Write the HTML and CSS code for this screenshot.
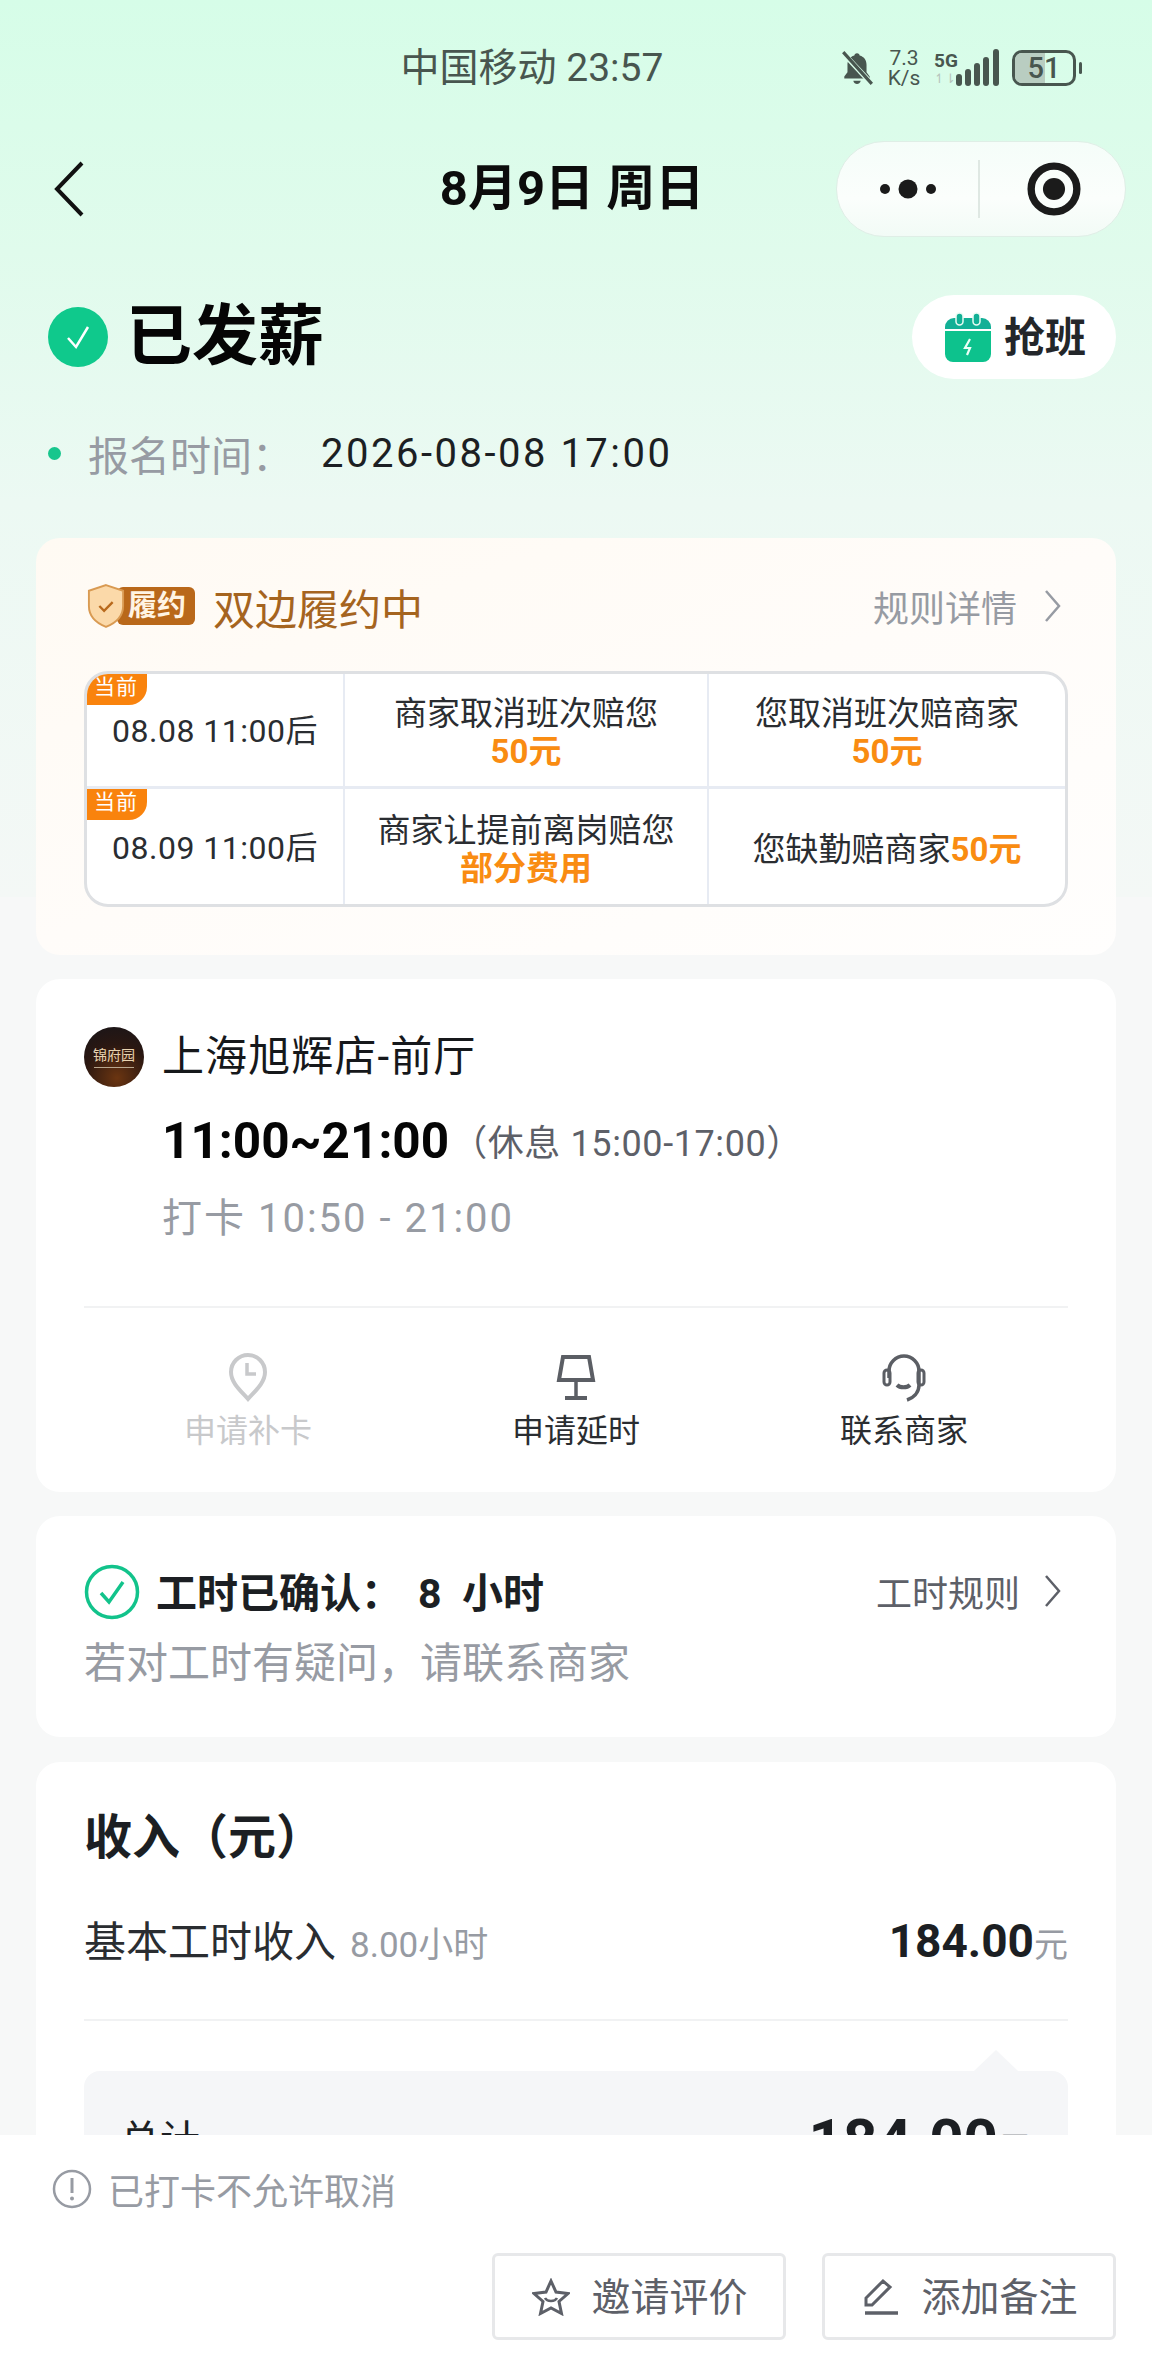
FILE: index.html
```html
<!DOCTYPE html>
<html lang="zh-CN">
<head>
    <meta charset="UTF-8">
    <meta name="viewport" content="width=device-width, initial-scale=1.0">
    <title>8月9日 周日</title>
    <link rel="stylesheet" href="styles.css">
</head>
<body>
    <div class="page">
        <div class="status-bar">
            <div class="status-center">中国移动 23:57</div>
            <div class="status-icons">
                <svg class="ic-bell" viewBox="0 0 32 34"><path d="M16 3c-1.500 0-2.500 1-2.500 2.300C9 6.500 7 10 7 14v7l-3 4v2h24v-2l-3-4v-7c0-4-2-7.500-6.500-8.700C18.500 4 17.500 3 16 3z" fill="#48564f"/><path d="M12.500 29h7c-.5 2-2 3-3.500 3s-3-1-3.500-3z" fill="#48564f"/><path d="M3 3l26 28" stroke="#d9fde9" stroke-width="5"/><path d="M3 2l27 30" stroke="#48564f" stroke-width="3"/></svg>
                <div class="net-speed"><span>7.3</span><span>K/s</span></div>
                <div class="net-type">
                    <span class="five-g">5G</span>
                    <span class="arrows">↿⇂</span>
                </div>
                <svg class="ic-signal" viewBox="0 0 44 38"><rect x="0" y="25" width="6" height="12" rx="3"/><rect x="9" y="20" width="6" height="17" rx="3"/><rect x="18" y="14" width="6" height="23" rx="3"/><rect x="27" y="8" width="6" height="29" rx="3"/><rect x="37" y="0" width="6" height="37" rx="3"/></svg>
                <div class="battery"><div class="battery-level" style="width: 51%"></div><span class="battery-num">51</span></div>
                <div class="battery-tip"></div>
            </div>
        </div>

        <div class="nav-bar">
            <svg class="ic-back" viewBox="0 0 34 58"><path d="M30 3L5 29l25 26" fill="none" stroke="#111" stroke-width="4"/></svg>
            <div class="nav-title">8月9日 周日</div>
            <div class="capsule">
                <div class="capsule-part">
                    <svg class="ic-dots" viewBox="0 0 58 22"><circle cx="6" cy="11" r="5"/><circle cx="29" cy="11" r="9.500"/><circle cx="52" cy="11" r="5"/></svg>
                </div>
                <div class="capsule-line"></div>
                <div class="capsule-part">
                    <svg class="ic-target" viewBox="0 0 38 38"><circle cx="19" cy="19" r="15.500" fill="none" stroke="#1b1b1b" stroke-width="5"/><circle cx="19" cy="19" r="7.500" fill="#1b1b1b"/></svg>
                </div>
            </div>
        </div>

        <div class="state-row">
            <div class="state-left">
                <svg class="ic-state" viewBox="0 0 60 60"><circle cx="30" cy="30" r="30" fill="#0fc98c"/><path d="M20 31l8 9 12-20" fill="none" stroke="#fff" stroke-width="2.500"/></svg>
                <h1 class="state-title">已发薪</h1>
            </div>
            <div class="grab-btn">
                <svg class="ic-cal" viewBox="0 0 50 50"><path d="M2 15a9 9 0 0 1 9-9h28a9 9 0 0 1 9 9v2H2z" fill="#12b096"/><path d="M2 19h46v23a8 8 0 0 1-8 8H10a8 8 0 0 1-8-8z" fill="#0dc28d"/><rect x="13" y="1" width="7" height="12" rx="3.500" fill="#12b096" stroke="#e9fbf3" stroke-width="1.500"/><rect x="30" y="1" width="7" height="12" rx="3.500" fill="#12b096" stroke="#e9fbf3" stroke-width="1.500"/><path d="M27 27l-5 9h5l-3 7" fill="none" stroke="#eafff6" stroke-width="2.200"/></svg>
                <span>抢班</span>
            </div>
        </div>

        <div class="sign-row">
            <i class="dot"></i>
            <span class="sign-label">报名时间：</span>
            <span class="sign-value">2026-08-08 17:00</span>
        </div>

        <div class="card card-contract">
            <div class="contract-head">
                <div class="contract-title">
                    <div class="contract-badge">
                        <svg class="ic-shield" viewBox="0 0 40 46"><path d="M20 1l18 6v16c0 11-8 18-18 22C10 41 2 34 2 23V7z" fill="#fbd9a9" stroke="#d99a52" stroke-width="2"/><path d="M13 23l5 5 9-9" fill="none" stroke="#b8691c" stroke-width="2.500"/></svg>
                        <span class="badge-text">履约</span>
                    </div>
                    <span>双边履约中</span>
                </div>
                <div class="link-gray">规则详情<svg class="ic-arrow" viewBox="0 0 18 34"><path d="M2 2l13 15L2 32" fill="none" stroke="currentColor" stroke-width="2.500"/></svg></div>
            </div>
            <div class="contract-table">
                <div class="cell cell-time"><span class="now-tag">当前</span>08.08 11:00后</div>
                <div class="cell">商家取消班次赔您<b>50元</b></div>
                <div class="cell">您取消班次赔商家<b>50元</b></div>
                <div class="cell cell-time"><span class="now-tag">当前</span>08.09 11:00后</div>
                <div class="cell">商家让提前离岗赔您<b>部分费用</b></div>
                <div class="cell cell-inline">您缺勤赔商家<b>50元</b></div>
            </div>
        </div>

        <div class="card card-shop">
            <div class="shop-row">
                <div class="shop-logo"><span>锦府园</span><i></i></div>
                <div class="shop-name">上海旭辉店-前厅</div>
            </div>
            <div class="shift-row">
                <span class="shift-time">11:00~21:00</span>
                <span class="shift-rest">（休息 15:00-17:00）</span>
            </div>
            <div class="clock-row">打卡 10:50 - 21:00</div>
            <div class="actions">
                <div class="action disabled">
                    <svg viewBox="0 0 50 50"><path d="M25 46C18 38 8 30 8 19a17 17 0 0 1 34 0c0 11-10 19-17 27z" fill="none" stroke="#c8c9cb" stroke-width="4"/><path d="M24 10v11h9" fill="none" stroke="#c8c9cb" stroke-width="3.500"/></svg>
                    <span>申请补卡</span>
                </div>
                <div class="action">
                    <svg viewBox="0 0 50 50"><path d="M12 4h26l4 23H8z" fill="none" stroke="#5b5e64" stroke-width="4"/><path d="M25 27v17" stroke="#5b5e64" stroke-width="3.500"/><path d="M14 45h22" stroke="#5b5e64" stroke-width="4"/></svg>
                    <span>申请延时</span>
                </div>
                <div class="action">
                    <svg viewBox="0 0 50 50"><path d="M10 25v-7a15 15 0 0 1 30 0v14c0 8-6 13-12 15" fill="none" stroke="#5b5e64" stroke-width="3.500"/><rect x="5" y="17" width="6" height="15" rx="3" fill="none" stroke="#5b5e64" stroke-width="3"/><rect x="39" y="17" width="6" height="15" rx="3" fill="none" stroke="#5b5e64" stroke-width="3"/><path d="M18 32c3 3 10 3 13 0" fill="none" stroke="#5b5e64" stroke-width="4"/></svg>
                    <span>联系商家</span>
                </div>
            </div>
        </div>

        <div class="card card-hours">
            <div class="hours-head">
                <div class="hours-title">
                    <svg class="ic-ok" viewBox="0 0 56 56"><circle cx="28" cy="28" r="25.500" fill="none" stroke="#12c38b" stroke-width="3.500"/><path d="M17 29l8 9 14-20" fill="none" stroke="#12c38b" stroke-width="3.500"/></svg>
                    <span>工时已确认：</span><span class="hours-num">8&nbsp; 小时</span>
                </div>
                <div class="link-dark">工时规则<svg class="ic-arrow" viewBox="0 0 18 34"><path d="M2 2l13 15L2 32" fill="none" stroke="currentColor" stroke-width="2.500"/></svg></div>
            </div>
            <div class="hours-hint">若对工时有疑问，请联系商家</div>
        </div>

        <div class="card card-income">
            <h2 class="income-title">收入（元）</h2>
            <div class="income-row">
                <div class="income-left">基本工时收入<span class="income-hours">8.00小时</span></div>
                <div class="income-money">184.00<span>元</span></div>
            </div>
            <div class="income-total">
                <span class="total-label">总计</span>
                <span class="total-money">184.00<span>元</span></span>
            </div>
        </div>

        <div class="bottom-bar">
            <div class="cancel-tip">
                <svg class="ic-info" viewBox="0 0 40 40"><circle cx="20" cy="20" r="18" fill="none" stroke="#979ba3" stroke-width="2.500"/><path d="M20 9v15" stroke="#979ba3" stroke-width="3"/><circle cx="20" cy="29.500" r="2" fill="#979ba3"/></svg>
                <span>已打卡不允许取消</span>
            </div>
            <div class="bottom-btns">
                <div class="btn">
                    <svg viewBox="0 0 38 38"><path d="M19 3l5 11 12 1.500-9 8 2.500 12L19 30l-10.500 5.500 2.500-12-9-8L14 14z" fill="none" stroke="#5d6068" stroke-width="3"/><path d="M13 20c2 4 10 4 12 0" fill="none" stroke="#5d6068" stroke-width="2.500"/></svg>
                    <span>邀请评价</span>
                </div>
                <div class="btn">
                    <svg viewBox="0 0 38 38"><path d="M4 27V20L21 3l7 6-18 18z" fill="none" stroke="#5d6068" stroke-width="3"/><path d="M3 35h33" stroke="#5d6068" stroke-width="3.500"/></svg>
                    <span>添加备注</span>
                </div>
            </div>
        </div>
    </div>
</body>
</html>
```

FILE: styles.css
```css
* { box-sizing: border-box; }
html, body { margin: 0; padding: 0; }
body { font-family: Roboto, "Noto Sans CJK SC", "Noto Sans", sans-serif; color: #1c1f23; }
h1, h2 { margin: 0; }
svg { display: block; flex: none; }

.page {
    position: relative;
    width: 1152px;
    height: 2376px;
    overflow: hidden;
    background: #f7f8f8 linear-gradient(180deg, #d6fde8 0%, #e0fbec 28%, #ecf9f3 56%, #f4f8f6 100%) no-repeat;
    background-size: 100% 897px;
}

/* status bar */
.status-bar { position: relative; height: 136px; padding-top: 42px; }
.status-center { text-align: center; font-size: 39px; line-height: 52px; color: #48564f; padding-right: 88px; }
.status-icons { position: absolute; left: 840px; top: 46px; display: flex; align-items: center; height: 44px; }
.ic-bell { width: 34px; height: 36px; }
.net-speed { display: flex; flex-direction: column; margin-left: 12px; width: 36px; font-size: 21px; line-height: 20px; color: #48564f; text-align: center; }
.net-type { display: flex; flex-direction: column; margin-left: 12px; width: 24px; color: #48564f; }
.five-g { font-size: 19px; line-height: 21px; font-weight: 700; }
.arrows { font-size: 13px; line-height: 16px; color: #b6c4bc; white-space: nowrap; }
.ic-signal { width: 44px; height: 38px; fill: #48564f; margin-left: -2px; }
.battery { position: relative; width: 64px; height: 36px; margin-left: 12px; border: 3px solid #48564f; border-radius: 10px; overflow: hidden; }
.battery-level { height: 100%; background: #b9cdc1; }
.battery-num { position: absolute; inset: 0; text-align: center; font-size: 29px; line-height: 30px; color: #48564f; font-weight: 500; }
.battery-tip { width: 3px; height: 12px; margin-left: 3px; border-radius: 2px; background: #48564f; }

/* nav */
.nav-bar { position: relative; display: flex; align-items: center; justify-content: center; height: 100px; }
.ic-back { position: absolute; left: 52px; top: 24px; width: 34px; height: 58px; }
.nav-title { font-size: 49px; font-weight: 700; line-height: 60px; color: #0c0c0c; margin-right: 8px; margin-top: 6px; }
.capsule {
    position: absolute; left: 836px; top: 5px; width: 290px; height: 96px;
    display: flex; align-items: center;
    border: 1.5px solid #dfeee6; border-radius: 48px;
    background: linear-gradient(180deg, #f5fdf9, #fbfefc 60%, #f2fbf6);
}
.capsule-part { flex: 1; display: flex; align-items: center; justify-content: center; }
.capsule-part:last-child { padding-left: 4px; }
.capsule-line { width: 1.5px; height: 58px; background: #dfe8e3; }
.ic-dots { width: 58px; height: 22px; fill: #1b1b1b; }
.ic-target { width: 56px; height: 56px; }

/* state */
.state-row { display: flex; align-items: center; justify-content: space-between; height: 84px; margin-top: 59px; padding: 0 36px 0 48px; }
.state-left { display: flex; align-items: center; }
.ic-state { width: 60px; height: 60px; }
.state-title { margin-left: 18px; font-size: 66px; font-weight: 700; line-height: 84px; color: #050505; }
.grab-btn { display: flex; align-items: center; gap: 11px; width: 204px; height: 84px; padding-left: 31px; border-radius: 42px; background: #fff; font-size: 41px; font-weight: 700; color: #23262a; }
.grab-btn span { margin-top: -6px; }
.ic-cal { width: 50px; height: 50px; }

.sign-row { display: flex; align-items: center; height: 50px; margin-top: 49px; padding-left: 48px; font-size: 40px; }
.dot { width: 13px; height: 13px; border-radius: 50%; background: #17c68d; }
.sign-label { margin-left: 27px; width: 233px; font-size: 41px; color: #979ba3; }
.sign-value { color: #1c1f23; letter-spacing: 2.500px; }

/* cards */
.card { margin: 0 36px 24px; background: #fff; border-radius: 24px; }
.card-contract { margin-top: 60px; height: 417px; padding: 38px 48px 0; background: linear-gradient(160deg, #fffaf3 0%, #fffcf9 50%, #fffefd 100%); }
.contract-head { display: flex; align-items: center; justify-content: space-between; height: 60px; }
.contract-title { display: flex; align-items: center; padding-left: 3px; font-size: 42px; color: #a5641f; }
.contract-badge { display: flex; align-items: center; width: 108px; height: 46px; margin-right: 18px; }
.ic-shield { width: 38px; height: 46px; z-index: 1; }
.badge-text { margin-left: -8px; width: 78px; height: 38px; padding-left: 11px; border-radius: 6px; background: #b9681a; color: #fff4e4; font-size: 29px; line-height: 38px; font-weight: 700; white-space: nowrap; }
.link-gray, .link-dark { display: flex; align-items: center; font-size: 36px; }
.link-gray { color: #979ba3; }
.link-dark { color: #5d6068; }
.ic-arrow { width: 18px; height: 34px; margin-left: 27px; margin-right: 6px; }
.link-dark .ic-arrow { margin-left: 24px; }

.contract-table {
    display: grid;
    grid-template-columns: 258px 364px 1fr;
    grid-template-rows: 1fr 1fr;
    width: 984px; height: 236px;
    margin-top: 35px;
    border: 3px solid #dee0e3;
    border-radius: 24px;
    background: #fff;
    overflow: hidden;
}
.cell { position: relative; display: flex; flex-direction: column; align-items: center; justify-content: center; padding-top: 6px; border-right: 2px solid #e7ebf3; border-bottom: 3px solid #e7ebf3; font-size: 33px; line-height: 38px; color: #2a2d31; }
.cell:nth-child(3n) { border-right: 0; }
.cell:nth-child(n+4) { border-bottom: 0; }
.cell b { color: #f98c12; font-weight: 700; }
.cell-inline { flex-direction: row; }
.cell-time { padding-top: 2px; font-size: 32px; letter-spacing: .5px; }
.now-tag { position: absolute; left: 0; top: 0; width: 60px; height: 31px; padding-left: 7px; background: #f9830d; border-radius: 0 0 18px 0; color: #fff; font-size: 21px; line-height: 26px; letter-spacing: 1px; }

.card-shop { height: 513px; padding: 48px 48px 0; }
.shop-row { display: flex; align-items: center; height: 60px; }
.shop-logo { display: flex; flex-direction: column; align-items: center; justify-content: center; width: 60px; height: 60px; border-radius: 50%; background: radial-gradient(circle at 55% 85%, #6b3511, #2a1711 55%, #17151a); }
.shop-logo span { font-size: 14px; line-height: 16px; color: #e8d3b0; white-space: nowrap; }
.shop-logo i { width: 40px; height: 1px; margin-top: 4px; background: #b9a78f; }
.shop-name { margin-left: 18px; margin-top: -10px; font-size: 42px; letter-spacing: 1.100px; color: #16181b; }
.shift-row { display: flex; align-items: center; height: 60px; margin-top: 24px; padding-left: 78px; }
.shift-time { font-size: 49.500px; font-weight: 700; color: #050505; }
.shift-rest { margin-left: 2px; margin-top: -2px; font-size: 36px; letter-spacing: .6px; color: #5d6068; }
.clock-row { height: 50px; margin-top: 23px; padding-left: 78px; font-size: 40px; letter-spacing: 2px; line-height: 50px; color: #979ba3; }
.actions { display: grid; grid-template-columns: repeat(3, 1fr); margin-top: 62px; padding-top: 45px; border-top: 2px solid #f1f2f3; }
.action { display: flex; flex-direction: column; align-items: center; font-size: 32px; line-height: 42px; color: #2a2d31; }
.action svg { width: 50px; height: 50px; margin-bottom: 7px; }
.action.disabled { color: #c8c9cb; }

.card-hours { height: 221px; padding: 48px 48px 0; margin-bottom: 25px; }
.hours-head { display: flex; align-items: center; justify-content: space-between; height: 56px; }
.hours-title { display: flex; align-items: center; font-size: 41px; font-weight: 700; color: #1c1f23; }
.hours-title span { margin-top: -5px; }
.ic-ok { width: 56px; height: 56px; margin-right: 16px; }
.hours-num { margin-left: 16px; }
.link-dark { margin-top: -2px; }
.hours-hint { margin-top: 16px; font-size: 42px; line-height: 56px; color: #979ba3; }

.card-income { height: 700px; padding: 44px 48px 0; }
.income-title { font-size: 48px; font-weight: 700; line-height: 64px; color: #1c1f23; }
.income-row { display: flex; align-items: center; justify-content: space-between; height: 133px; margin-top: 18px; padding-bottom: 31px; border-bottom: 2px solid #f1f2f3; }
.income-left { display: flex; align-items: baseline; font-size: 42px; color: #2a2d31; }
.income-hours { margin-left: 14px; font-size: 35px; color: #979ba3; }
.income-money { margin-top: 5px; font-size: 46px; font-weight: 700; color: #1c1f23; }
.income-money span, .total-money span { font-size: 34px; font-weight: 400; color: #979ba3; }
.income-total { position: relative; display: flex; justify-content: space-between; height: 200px; margin-top: 50px; padding: 40px 36px; border-radius: 16px; background: #f5f6f8; }
.income-total::before { content: ""; position: absolute; right: 50px; top: -21px; border: 22px solid transparent; border-top: 0; border-bottom: 21px solid #f5f6f8; }
.total-label { font-size: 40px; line-height: 60px; }
.total-money { font-size: 60px; font-weight: 700; line-height: 60px; }

/* bottom fixed bar */
.bottom-bar { position: absolute; left: 0; right: 0; bottom: 0; height: 241px; padding: 26px 36px 0 52px; background: #fff; }
.cancel-tip { display: flex; align-items: center; height: 56px; font-size: 36px; color: #979ba3; }
.ic-info { width: 40px; height: 40px; margin-right: 16px; }
.bottom-btns { display: flex; justify-content: flex-end; gap: 36px; margin-top: 36px; }
.btn { display: flex; align-items: center; justify-content: center; gap: 21px; width: 294px; height: 87px; padding-left: 2px; border: 3px solid #e7e8ea; border-radius: 6px; font-size: 39px; color: #5d6068; }
.btn span { margin-top: -6px; }
.btn svg { width: 38px; height: 38px; }
```
